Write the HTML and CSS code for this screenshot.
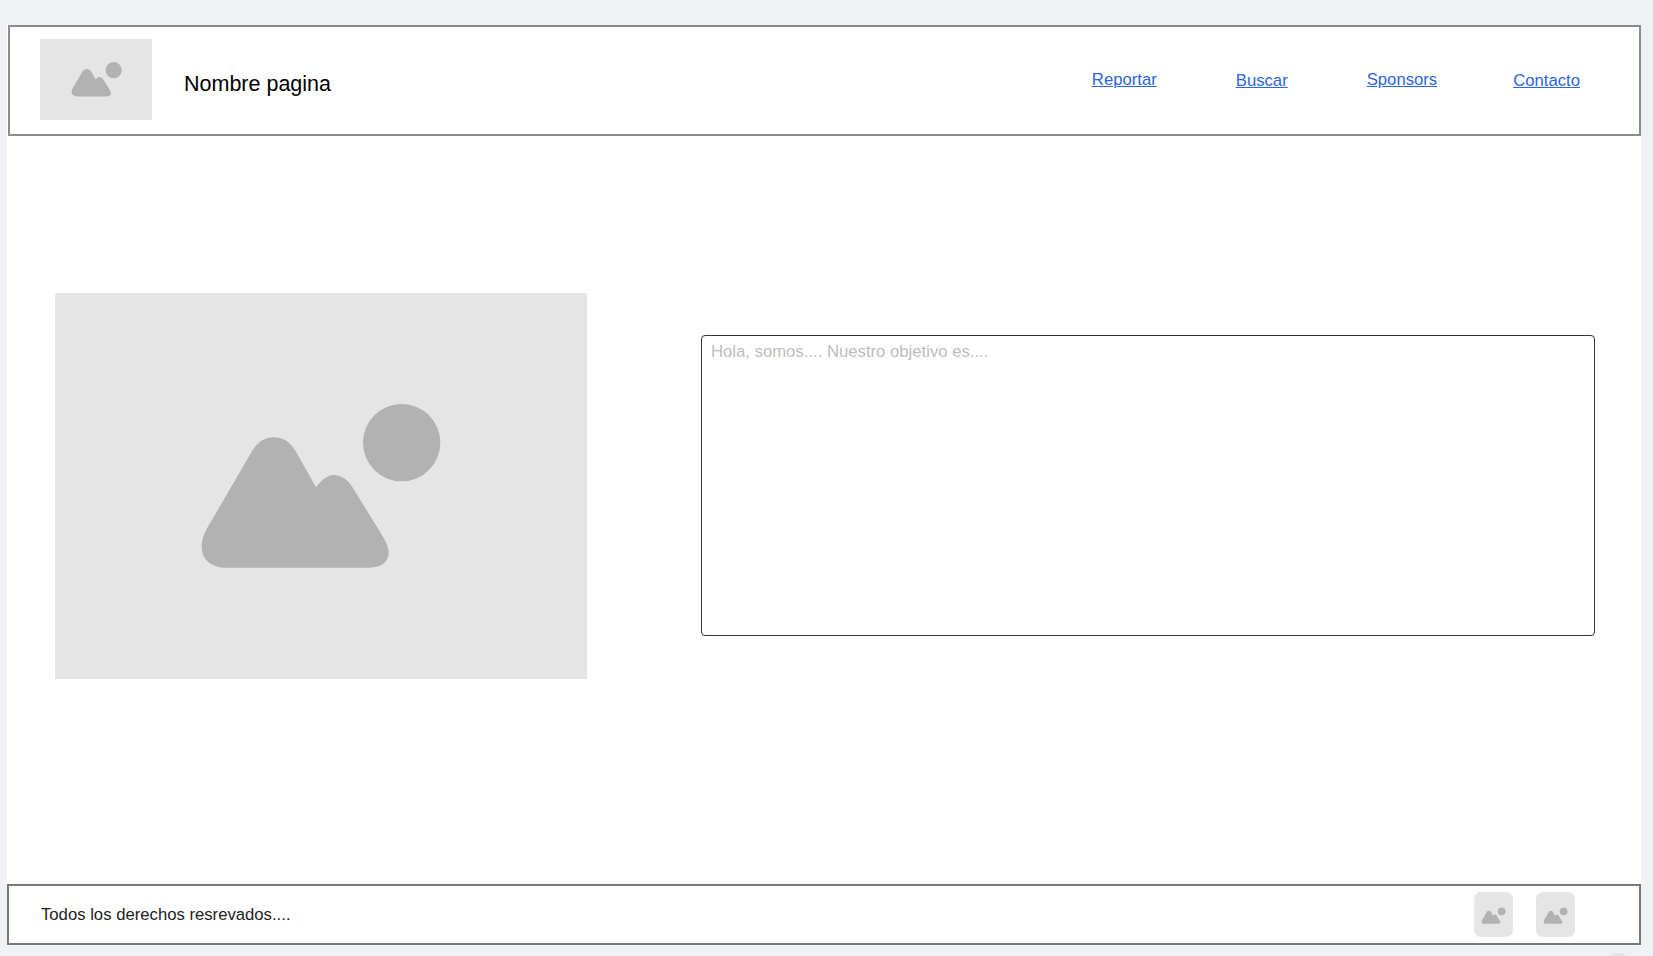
FILE: index.html
```html
<!DOCTYPE html>
<html lang="es">
<head>
    <meta charset="UTF-8">
    <meta name="viewport" content="width=device-width, initial-scale=1.0">
    <title>Nombre pagina</title>
    <link rel="stylesheet" href="styles.css">
</head>
<body>

<svg class="icon-defs" aria-hidden="true">
    <symbol id="placeholder" viewBox="0 0 840 600">
        <path d="M283 172 C320 172 340 200 352 222 L408 322 C420 305 440 285 460 285 C485 285 503 300 515 318 L600 455 C615 480 626 498 626 518 C626 548 600 563 565 563 L140 563 C95 563 65 540 65 500 C65 475 75 455 90 430 L215 215 C230 190 250 172 283 172 Z"/>
        <circle cx="665" cy="188" r="116"/>
    </symbol>
</svg>

<div class="page">
    <!-- Header -->
    <header class="header">
        <div class="logo">
            <svg class="logo-icon"><use href="#placeholder"/></svg>
        </div>
        <div class="site-name">Nombre pagina</div>
        <nav class="nav">
            <a href="#" class="nav-link raised">Reportar</a>
            <a href="#" class="nav-link">Buscar</a>
            <a href="#" class="nav-link raised">Sponsors</a>
            <a href="#" class="nav-link last">Contacto</a>
        </nav>
    </header>

    <!-- Main -->
    <main class="main">
        <div class="hero-image">
            <svg class="hero-icon"><use href="#placeholder"/></svg>
        </div>
        <textarea class="about" placeholder="Hola, somos.... Nuestro objetivo es...."></textarea>
    </main>

    <!-- Footer -->
    <footer class="footer">
        <span class="copyright">Todos los derechos resrevados....</span>
        <div class="social">
            <div class="social-item"><svg class="social-icon"><use href="#placeholder"/></svg></div>
            <div class="social-item"><svg class="social-icon"><use href="#placeholder"/></svg></div>
        </div>
    </footer>
</div>

<!-- edge of the floating round button, mostly below the fold -->
<div class="float-button"></div>

</body>
</html>
```

FILE: styles.css
```css
body {
    font-family: "Liberation Sans", Arial, sans-serif;
    margin: 0;
    height: 956px;
    overflow: hidden;
    background-color: #eff1f5;
}
.icon-defs {
    display: none;
}
.page {
    width: 1634px;
    margin: 25px 0 0 7px;
    height: 920px;
    background-color: #fff;
    display: flex;
    flex-direction: column;
}
.header {
    height: 111px;
    margin-left: 1px;
    border: 2px solid #8b8c90;
    box-sizing: border-box;
    display: flex;
    align-items: center;
    padding-left: 30px;
    padding-right: 59px;
}
.logo {
    width: 112px;
    height: 81px;
    margin-bottom: 3px;
    background-color: #e5e5e5;
    display: flex;
    align-items: center;
    justify-content: center;
    flex-shrink: 0;
}
.logo-icon {
    width: 59px;
    height: 42px;
    margin-bottom: 3px;
    fill: #b2b2b2;
}
.site-name {
    font-size: 21.5px;
    color: #000;
    margin-left: 32px;
    margin-top: 7px;
}
.nav {
    margin-left: auto;
    display: flex;
    align-items: center;
    gap: 79px;
    font-size: 16.7px;
}
.nav-link {
    color: #2c65e0;
    margin-top: 1px;
}
.nav-link.raised {
    margin-top: -1px;
}
.nav-link.last {
    margin-left: -3px;
}
.main {
    flex: 1;
    display: flex;
    align-items: center;
    padding: 0 46px 49px 48px;
    justify-content: space-between;
}
.hero-image {
    width: 532px;
    height: 386px;
    background-color: #e5e5e5;
    display: flex;
    align-items: center;
    justify-content: center;
    padding-bottom: 12px;
    padding-right: 2px;
    box-sizing: border-box;
}
.hero-icon {
    width: 280px;
    height: 200px;
    fill: #b2b2b2;
}
.about {
    width: 894px;
    height: 301px;
    box-sizing: border-box;
    border: 1.5px solid #333;
    border-radius: 4px;
    padding: 6px 9px;
    font-family: inherit;
    font-size: 16.7px;
    resize: none;
    outline: none;
}
.about::placeholder {
    color: #bcbcbc;
}
.footer {
    height: 61px;
    border: 2px solid #77787b;
    box-sizing: border-box;
    display: flex;
    align-items: center;
    justify-content: space-between;
    padding-left: 32px;
    padding-right: 64px;
}
.copyright {
    font-size: 16.7px;
    color: #222;
}
.social {
    display: flex;
    gap: 23px;
}
.social-item {
    width: 39px;
    height: 45px;
    border-radius: 7px;
    background-color: #e5e5e5;
    display: flex;
    align-items: center;
    justify-content: center;
}
.social-icon {
    width: 29px;
    height: 20px;
    fill: #b2b2b2;
}
.float-button {
    position: absolute;
    left: 1602px;
    top: 953px;
    width: 32px;
    height: 32px;
    border-radius: 50%;
    background-color: #e3e4eb;
}
```
